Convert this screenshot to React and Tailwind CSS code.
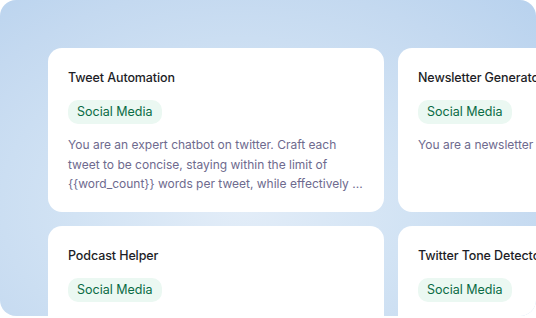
export default function App() {
  const cards = [
    {
      title: "Tweet Automation",
      desc: "You are an expert chatbot on twitter. Craft each tweet to be concise, staying within the limit of {{word_count}} words per tweet, while effectively ...",
    },
    {
      title: "Newsletter Generator",
      desc: "You are a newsletter generator.",
    },
    {
      title: "Podcast Helper",
      desc: "You are a podcast assistant.",
    },
    {
      title: "Twitter Tone Detector",
      desc: "You are a tone detector.",
    },
  ];
  return (
    <div className="w-[536px] h-[318px] bg-white" style={{ fontFamily: "Inter, 'Noto Sans', sans-serif" }}>
      <div className="w-[536px] h-[316px] overflow-hidden rounded-[16px] bg-[radial-gradient(ellipse_at_45%_65%,#e3edf8_0%,#d2e3f4_40%,#c4d9f0_75%,#b8d2ee_100%)]">
        <div className="grid grid-cols-[336px_336px] gap-[14px] pl-[48px] pt-[48px] w-max">
          {cards.map((c) => (
            <div key={c.title} className="h-[164px] rounded-[14px] bg-white px-[20px] pt-[21px]">
              <div className="text-[12.5px] leading-[18px] font-medium text-[#1d1d26] whitespace-nowrap tracking-[-0.1px]">{c.title}</div>
              <div className="mt-[13px] inline-flex h-[24px] items-center rounded-[10px] bg-[#ebf8f2] px-[9px] text-[12.5px] text-[#0a6b45]">
                Social Media
              </div>
              <p className="mt-[11px] text-[12px] leading-[19.5px] text-[#6e6a8e] whitespace-pre-line">
                {c.desc}
              </p>
            </div>
          ))}
        </div>
      </div>
    </div>
  );
}
